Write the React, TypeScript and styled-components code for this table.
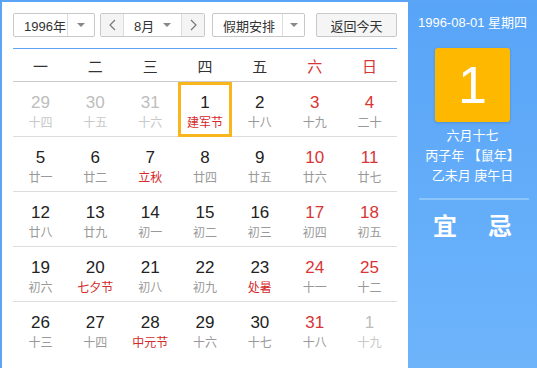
import React from "react";
import styled, { createGlobalStyle, css } from "styled-components";

const Global = createGlobalStyle`
  html, body { margin: 0; padding: 0; background: #fff; }
  body { font-family: "Liberation Sans", "Noto Sans CJK SC", sans-serif; }
`;

const FONT = `"Liberation Sans", "Noto Sans CJK SC", sans-serif`;

const Widget = styled.div`
  display: flex;
  width: 537px;
  height: 368px;
  overflow: hidden;
  box-sizing: border-box;
  border-top: 2px solid #5aa5f6;
  border-left: 2px solid #5aa5f6;
  font-family: ${FONT};
`;

const Main = styled.div`
  width: 406px;
  flex: none;
  box-sizing: border-box;
  padding: 11px 11px 0 11px;
  background: #fff;
`;

const Toolbar = styled.div`
  display: flex;
  align-items: center;
  height: 24px;
  padding-bottom: 11px;
  border-bottom: 1px solid #5aa5f6;
`;

const SelectBox = styled.div<{ $w: number; $gap?: number }>`
  display: flex;
  width: ${(p) => p.$w}px;
  height: 24px;
  margin-left: ${(p) => p.$gap ?? 0}px;
  box-sizing: border-box;
  border: 1px solid #c8c8c8;
  border-radius: 2px;
  background: #fff;
  font-size: 13px;
  color: #333;
  white-space: nowrap;
`;

const SelectLabel = styled.div`
  flex: 1;
  display: flex;
  align-items: center;
  padding-left: 10px;
  border-right: 1px solid #ddd;
`;

const ArrowCell = styled.div<{ $w: number }>`
  width: ${(p) => p.$w}px;
  display: flex;
  align-items: center;
  justify-content: center;
`;

const Caret = styled.span`
  width: 0;
  height: 0;
  border-left: 4px solid transparent;
  border-right: 4px solid transparent;
  border-top: 4px solid #888;
`;

const StepButton = styled.div<{ $side: "l" | "r" }>`
  width: 22px;
  display: flex;
  align-items: center;
  justify-content: center;
  background: #f4f4f4;
  ${(p) =>
    p.$side === "l"
      ? css`border-right: 1px solid #ddd;`
      : css`border-left: 1px solid #ddd;`}
`;

const MonthMid = styled.div`
  flex: 1;
  display: flex;
  align-items: center;
  justify-content: space-between;
  padding: 0 10px 0 10px;
`;

const TodayButton = styled.div`
  margin-left: 11px;
  width: 81px;
  height: 24px;
  box-sizing: border-box;
  border: 1px solid #c8c8c8;
  border-radius: 2px;
  background: #f5f5f5;
  font-size: 13px;
  color: #333;
  display: flex;
  align-items: center;
  justify-content: center;
`;

const Grid = styled.div`
  display: grid;
  grid-template-columns: repeat(7, 1fr);
`;

const WeekHead = styled.div<{ $red?: boolean }>`
  height: 32px;
  display: flex;
  align-items: center;
  justify-content: center;
  font-size: 15px;
  color: ${(p) => (p.$red ? "#d83535" : "#333")};
  border-bottom: 1px solid #ccc;
`;

const Cell = styled.div<{ $selected?: boolean; $last?: boolean }>`
  height: 55px;
  box-sizing: border-box;
  display: flex;
  flex-direction: column;
  align-items: center;
  padding-top: 11px;
  border-bottom: ${(p) => (p.$last ? "none" : "1px solid #ddd")};
  ${(p) =>
    p.$selected &&
    css`
      outline: 3px solid #f8b51c;
      outline-offset: -3px;
    `}
`;

const DayNum = styled.div<{ $tone: "normal" | "red" | "muted" }>`
  font-size: 17px;
  line-height: 20px;
  color: ${(p) =>
    p.$tone === "red" ? "#d83535" : p.$tone === "muted" ? "#bdbdbd" : "#222"};
`;

const Lunar = styled.div<{ $tone: "normal" | "red" | "muted" }>`
  margin-top: 2px;
  font-size: 12px;
  line-height: 16px;
  color: ${(p) =>
    p.$tone === "red" ? "#d42a2a" : p.$tone === "muted" ? "#c8c8c8" : "#999"};
`;

const Side = styled.div`
  flex: 1;
  display: flex;
  flex-direction: column;
  align-items: center;
  padding-top: 13px;
  background: linear-gradient(#58a4f7, #6db4fb);
  color: #fff;
  margin-top: -2px;
`;

const SideDate = styled.div`
  font-size: 13px;
  line-height: 20px;
`;

const BigDay = styled.div`
  margin-top: 15px;
  width: 75px;
  height: 74px;
  border-radius: 3px;
  background: #ffb800;
  box-shadow: 0 1px 3px rgba(0, 0, 0, 0.15);
  display: flex;
  align-items: center;
  justify-content: center;
  font-size: 52px;
  color: #fff;
`;

const SideLines = styled.div`
  margin-top: 4px;
  display: flex;
  flex-direction: column;
  align-items: center;
  font-size: 13px;
  line-height: 20px;
`;

const Divider = styled.div`
  align-self: stretch;
  margin: 12px 8px 0 11px;
  height: 2px;
  background: #8cc5fb;
`;

const YiJi = styled.div`
  margin-top: 12px;
  display: flex;
  gap: 31px;
  font-size: 24px;
  line-height: 30px;
  font-weight: bold;
`;

type Tone = "normal" | "red" | "muted";
type Day = { n: number; l: string; nt: Tone; lt: Tone; sel?: boolean };

const Chevron = ({ dir }: { dir: "l" | "r" }) => (
  <svg width="7" height="12" viewBox="0 0 7 12">
    <polyline
      points={dir === "l" ? "6,1 1,6 6,11" : "1,1 6,6 1,11"}
      fill="none"
      stroke="#777"
      strokeWidth="1.2"
    />
  </svg>
);

const raw: [number, string][] = [
  [29, "十四"], [30, "十五"], [31, "十六"], [1, "建军节"], [2, "十八"], [3, "十九"], [4, "二十"],
  [5, "廿一"], [6, "廿二"], [7, "立秋"], [8, "廿四"], [9, "廿五"], [10, "廿六"], [11, "廿七"],
  [12, "廿八"], [13, "廿九"], [14, "初一"], [15, "初二"], [16, "初三"], [17, "初四"], [18, "初五"],
  [19, "初六"], [20, "七夕节"], [21, "初八"], [22, "初九"], [23, "处暑"], [24, "十一"], [25, "十二"],
  [26, "十三"], [27, "十四"], [28, "中元节"], [29, "十六"], [30, "十七"], [31, "十八"], [1, "十九"],
];

const redLunar = new Set(["建军节", "立秋", "七夕节", "处暑", "中元节"]);

const days: Day[] = raw.map(([n, l], i) => {
  const muted = i < 3 || i === 34;
  const weekend = i % 7 >= 5;
  return {
    n,
    l,
    nt: muted ? "muted" : weekend ? "red" : "normal",
    lt: muted ? "muted" : redLunar.has(l) ? "red" : "normal",
    sel: i === 3,
  };
});

const weekNames = ["一", "二", "三", "四", "五", "六", "日"];

export default function App() {
  return (
    <>
      <Global />
      <Widget>
        <Main>
          <Toolbar>
            <SelectBox $w={82}>
              <SelectLabel>1996年</SelectLabel>
              <ArrowCell $w={26}>
                <Caret />
              </ArrowCell>
            </SelectBox>
            <SelectBox $w={105} $gap={5}>
              <StepButton $side="l">
                <Chevron dir="l" />
              </StepButton>
              <MonthMid>
                <span>8月</span>
                <Caret />
              </MonthMid>
              <StepButton $side="r">
                <Chevron dir="r" />
              </StepButton>
            </SelectBox>
            <SelectBox $w={93} $gap={7}>
              <SelectLabel>假期安排</SelectLabel>
              <ArrowCell $w={21}>
                <Caret />
              </ArrowCell>
            </SelectBox>
            <TodayButton>返回今天</TodayButton>
          </Toolbar>
          <Grid>
            {weekNames.map((w, i) => (
              <WeekHead key={w} $red={i >= 5}>
                {w}
              </WeekHead>
            ))}
            {days.map((d, i) => (
              <Cell key={i} $selected={d.sel} $last={i >= 28}>
                <DayNum $tone={d.nt}>{d.n}</DayNum>
                <Lunar $tone={d.lt}>{d.l}</Lunar>
              </Cell>
            ))}
          </Grid>
        </Main>
        <Side>
          <SideDate>1996-08-01 星期四</SideDate>
          <BigDay>1</BigDay>
          <SideLines>
            <span>六月十七</span>
            <span>丙子年 【鼠年】</span>
            <span>乙未月 庚午日</span>
          </SideLines>
          <Divider />
          <YiJi>
            <span>宜</span>
            <span>忌</span>
          </YiJi>
        </Side>
      </Widget>
    </>
  );
}
